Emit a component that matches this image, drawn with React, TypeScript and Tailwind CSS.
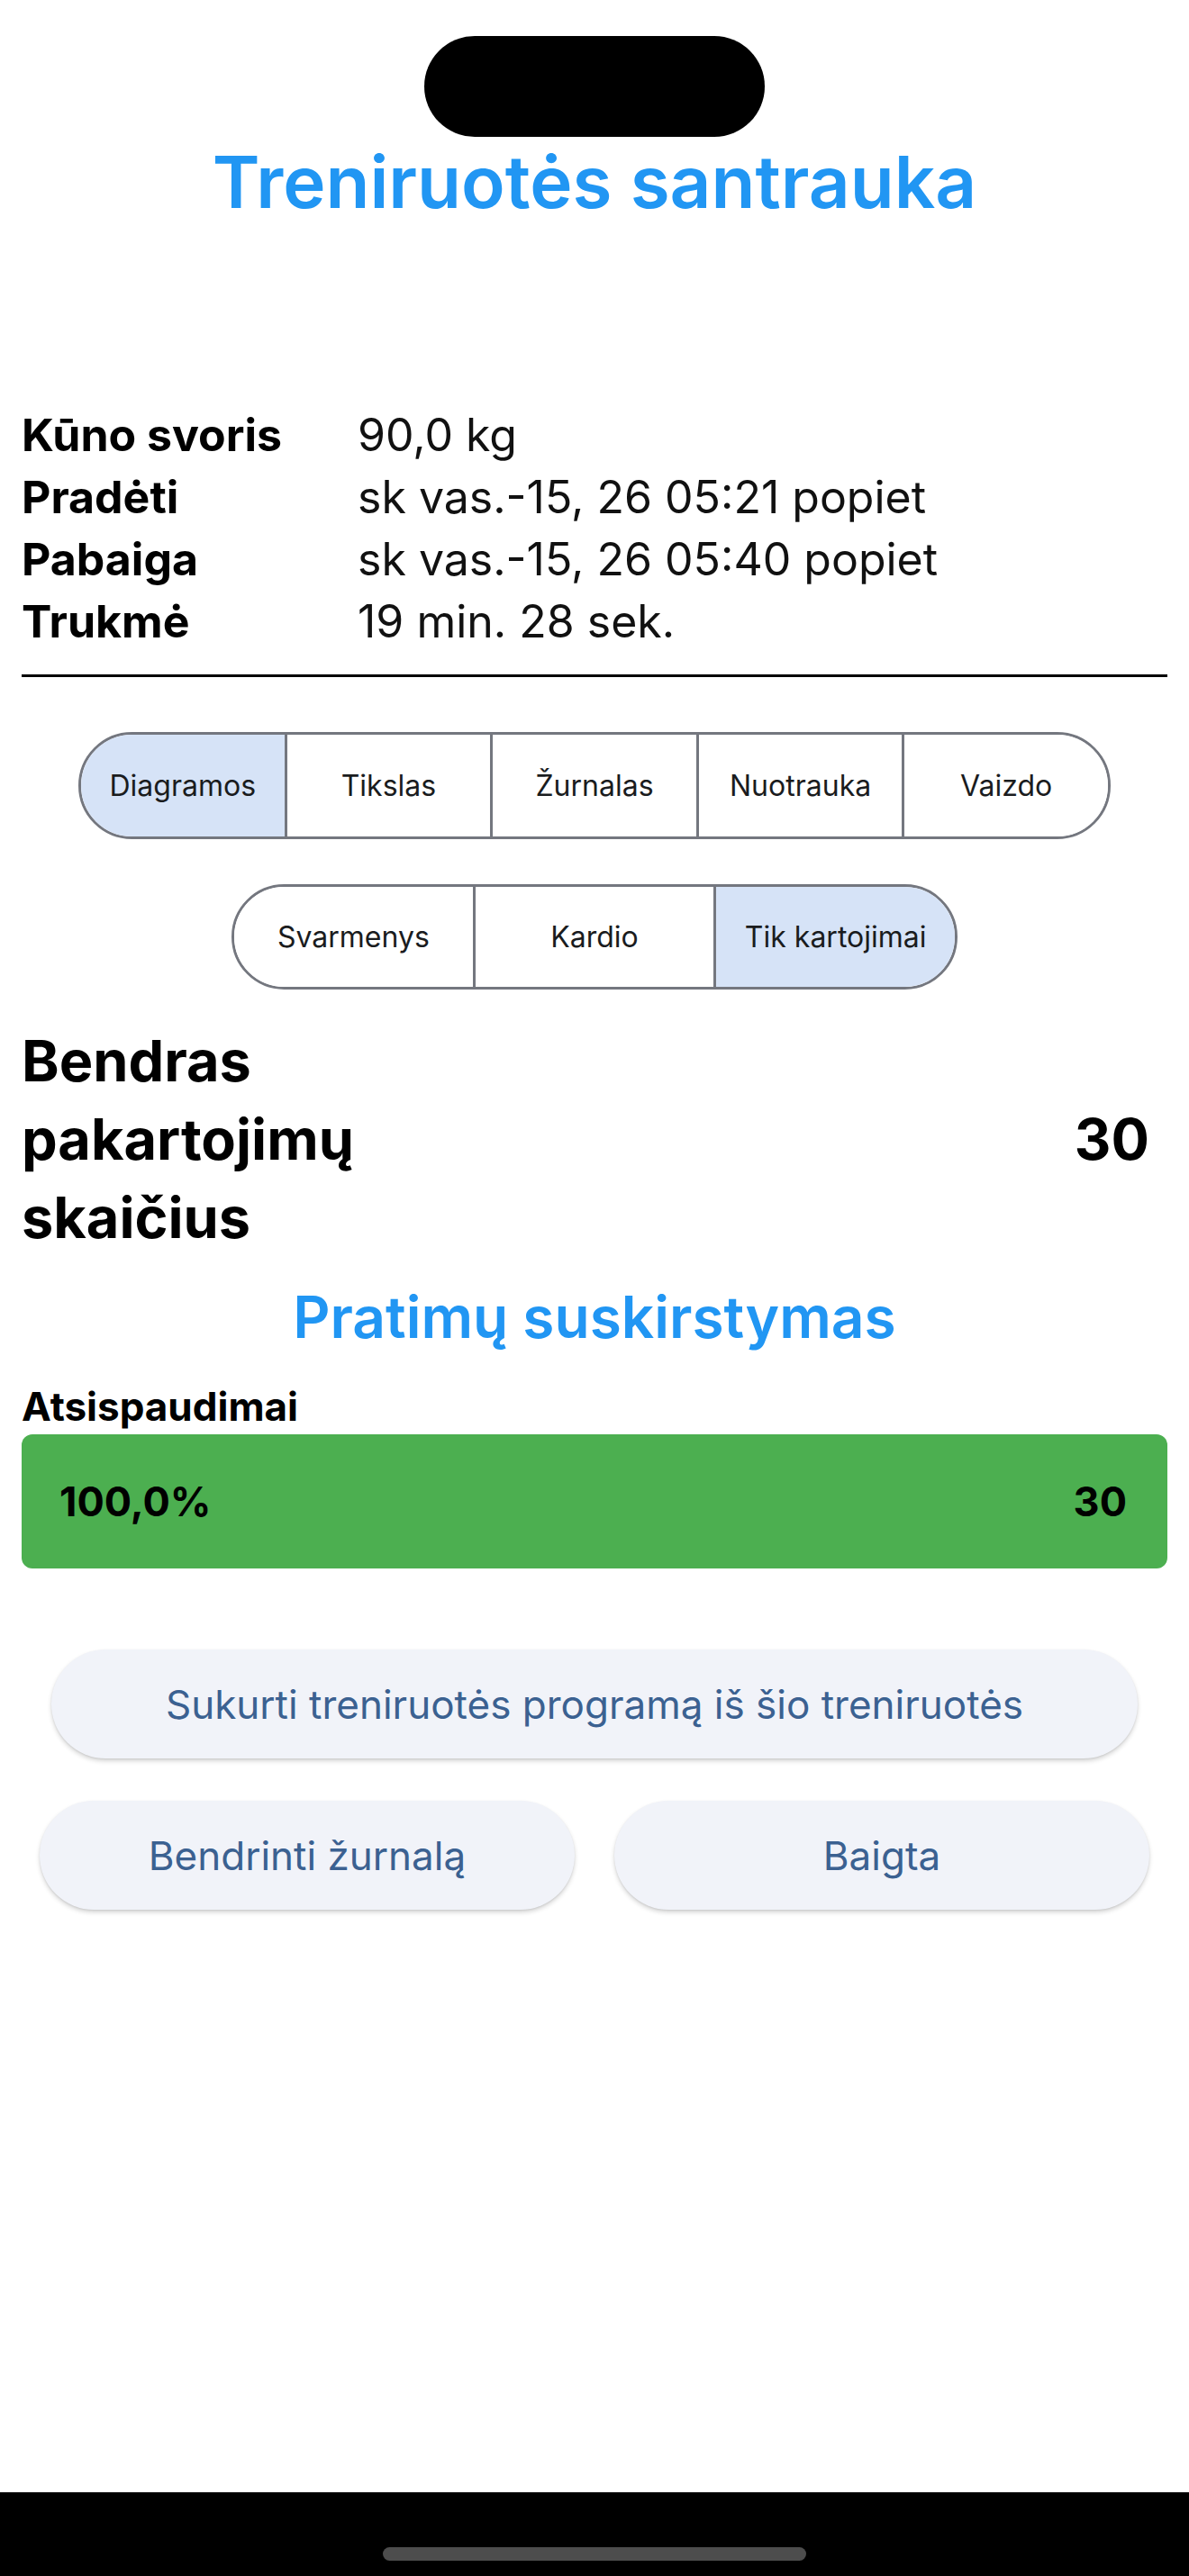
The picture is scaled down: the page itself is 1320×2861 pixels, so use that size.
const info = [
  { label: 'Kūno svoris', value: '90,0 kg' },
  { label: 'Pradėti', value: 'sk vas.-15, 26 05:21 popiet' },
  { label: 'Pabaiga', value: 'sk vas.-15, 26 05:40 popiet' },
  { label: 'Trukmė', value: '19 min. 28 sek.' },
];

const mainTabs = ['Diagramos', 'Tikslas', 'Žurnalas', 'Nuotrauka', 'Vaizdo'];
const typeTabs = ['Svarmenys', 'Kardio', 'Tik kartojimai'];

const Segmented = ({ items, active, width, height }: { items: string[]; active: number; width: string; height: string }) => (
  <div className={`mx-auto flex ${width} ${height} rounded-full border-[3px] border-[#74777f] overflow-hidden`}>
    {items.map((item, i) => (
      <div
        key={item}
        className={`flex-1 flex items-center justify-center text-[32px] text-[#1a1c1e] ${i > 0 ? 'border-l-[3px] border-[#74777f]' : ''} ${i === active ? 'bg-[#d6e3f7]' : 'bg-white'}`}
      >
        {item}
      </div>
    ))}
  </div>
);

const ActionButton = ({ children, className }: { children: React.ReactNode; className?: string }) => (
  <button
    className={`h-[121px] rounded-full bg-[#f1f3f9] text-[44px] text-[#3b6191] shadow-[0_3px_5px_rgba(0,0,0,0.16),0_1px_2px_rgba(0,0,0,0.08)] ${className ?? ''}`}
  >
    {children}
  </button>
);

export default function App() {
  return (
    <div className="w-[1320px] h-[2861px] bg-white flex flex-col font-['Inter','Noto_Sans',sans-serif] text-black">
      {/* dynamic island */}
      <div className="mx-auto mt-[40px] w-[378px] h-[112px] rounded-[56px] bg-black" />

      <h1 className="mt-[6px] text-center text-[80px] leading-[87px] font-semibold text-[#2196f3]">
        Treniruotės santrauka
      </h1>

      <div className="px-[24px]">
        <div className="mt-[204px] grid grid-cols-[373px_1fr] text-[50px] leading-[69px]">
          {info.map(row => (
            <div key={row.label} className="contents">
              <div className="font-bold">{row.label}</div>
              <div className="text-[#111]">{row.value}</div>
            </div>
          ))}
        </div>
        <div className="mt-[24px] h-[3px] bg-black" />
      </div>

      <div className="mt-[61px]">
        <Segmented items={mainTabs} active={0} width="w-[1146px]" height="h-[119px]" />
      </div>
      <div className="mt-[50px]">
        <Segmented items={typeTabs} active={2} width="w-[806px]" height="h-[117px]" />
      </div>

      <div className="px-[24px]">
        <div className="mt-[36px] flex items-center justify-between pr-[20px]">
          <div className="w-[420px] text-[63px] leading-[87px] font-bold">Bendras pakartojimų skaičius</div>
          <div className="text-[63px] leading-[87px] font-bold">30</div>
        </div>

        <h2 className="mt-[33px] text-center text-[64px] leading-[68px] font-semibold text-[#2196f3]">
          Pratimų suskirstymas
        </h2>

        <div className="mt-[40px] text-[44px] leading-[50px] font-bold">Atsispaudimai</div>
        <div className="mt-[6px] h-[149px] rounded-[12px] bg-[#4caf50] flex items-center justify-between pl-[42px] pr-[45px] text-[45px] leading-[50px] font-bold">
          <span>100,0%</span>
          <span>30</span>
        </div>
      </div>

      <div className="mt-[90px] px-[57px]">
        <ActionButton className="w-full">Sukurti treniruotės programą iš šio treniruotės</ActionButton>
      </div>
      <div className="mt-[47px] px-[44px] flex gap-[44px]">
        <ActionButton className="flex-1">Bendrinti žurnalą</ActionButton>
        <ActionButton className="flex-1">Baigta</ActionButton>
      </div>

      {/* home indicator bar */}
      <div className="mt-auto h-[93px] bg-black flex justify-center">
        <div className="mt-[61px] w-[470px] h-[15px] rounded-full bg-[#4d4d4d]" />
      </div>
    </div>
  );
}
